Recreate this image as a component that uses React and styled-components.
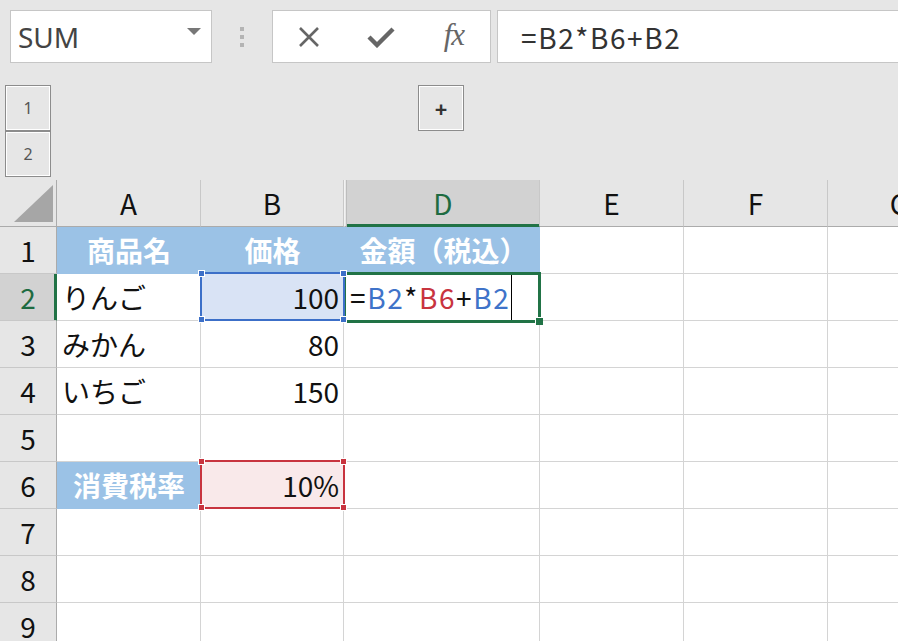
import React from "react";
import styled, { createGlobalStyle } from "styled-components";

const GlobalStyle = createGlobalStyle`
  html, body {
    margin: 0;
    padding: 0;
    background: #e6e6e6;
  }
  body {
    font-family: "Noto Sans CJK JP", "Noto Sans", sans-serif;
  }
`;

const COLS = ["A", "B", "C", "D", "E", "F", "G"];
const BLUE_FILL = "#9bc2e6";

const CELLS = {
  A1: { text: "商品名", fill: BLUE_FILL, head: true },
  B1: { text: "価格", fill: BLUE_FILL, head: true },
  C1: { fill: BLUE_FILL },
  D1: { text: "金額（税込）", fill: BLUE_FILL, head: true },
  A2: { text: "りんご" },
  B2: { text: "100", right: true, fill: "#d9e3f5", mark: "#3c6fc8" },
  D2: { formula: true },
  A3: { text: "みかん" },
  B3: { text: "80", right: true },
  A4: { text: "いちご" },
  B4: { text: "150", right: true },
  A6: { text: "消費税率", fill: BLUE_FILL, head: true },
  B6: { text: "10%", right: true, fill: "#f9e9ea", mark: "#c8343f" },
};

const App = () => {
  return (
    <>
      <GlobalStyle />
      <Page>
        <Toolbar>
          <NameBox>
            <span>SUM</span>
            <DropArrow />
          </NameBox>
          <Grip>
            <i />
            <i />
            <i />
          </Grip>
          <FuncBox>
            <FuncButton>
              <svg width="24" height="20" viewBox="0 0 24 20">
                <path d="M3 1 L21 19 M21 1 L3 19" stroke="#666" strokeWidth="2.6" fill="none" />
              </svg>
            </FuncButton>
            <FuncButton>
              <svg width="28" height="22" viewBox="0 0 28 22">
                <path d="M2 11 L10 19 L26 3" stroke="#666" strokeWidth="4.4" fill="none" />
              </svg>
            </FuncButton>
            <FuncButton>
              <Fx>fx</Fx>
            </FuncButton>
          </FuncBox>
          <FormulaBox>=B2*B6+B2</FormulaBox>
        </Toolbar>

        <OutlineBar>
          <LevelStack>
            <OutlineButton>1</OutlineButton>
            <OutlineButton>2</OutlineButton>
          </LevelStack>
          <OutlineButton $plus>+</OutlineButton>
        </OutlineBar>

        <Sheet>
          <Corner>
            <svg width="39" height="37" viewBox="0 0 39 37">
              <polygon points="39,0 39,37 0,37" fill="#a6a6a6" />
            </svg>
          </Corner>
          {COLS.map((c) => (
            <ColHead key={c} $active={c === "D"} $hidden={c === "C"}>
              {c === "C" ? "" : c}
            </ColHead>
          ))}

          {Array.from({ length: 9 }, (_, i) => i + 1).map((r) => (
            <React.Fragment key={r}>
              <RowHead $active={r === 2}>{r}</RowHead>
              {COLS.map((c) => {
                const cell = CELLS[c + r] || {};
                return (
                  <Cell
                    key={c}
                    $fill={cell.fill}
                    $head={cell.head}
                    $right={cell.right}
                    $rel={cell.mark || cell.formula}
                  >
                    {cell.text}
                    {cell.formula && (
                      <>
                        <Formula>
                          =<Ref $color="#3f73c9">B2</Ref>*<Ref $color="#c8343f">B6</Ref>+
                          <Ref $color="#3f73c9">B2</Ref>
                        </Formula>
                        <Caret />
                        <ActiveBorder />
                        <FillHandle />
                      </>
                    )}
                    {cell.mark && (
                      <RefBorder $color={cell.mark}>
                        <Handle $color={cell.mark} $top $left />
                        <Handle $color={cell.mark} $top />
                        <Handle $color={cell.mark} $left />
                        <Handle $color={cell.mark} />
                      </RefBorder>
                    )}
                  </Cell>
                );
              })}
            </React.Fragment>
          ))}
        </Sheet>
      </Page>
    </>
  );
};

export default App;

const Page = styled.div`
  width: 898px;
  height: 641px;
  overflow: hidden;
  background: #e6e6e6;
`;

const Toolbar = styled.div`
  display: flex;
  align-items: stretch;
  height: 53px;
  padding: 10px 0 0 10px;

  & > * {
    flex-shrink: 0;
  }
`;

const NameBox = styled.div`
  width: 202px;
  box-sizing: border-box;
  border: 1px solid #c6c6c6;
  background: #fff;
  display: flex;
  align-items: center;
  justify-content: space-between;
  padding: 0 10px 0 7px;
  font-family: "Noto Sans", sans-serif;
  font-size: 28px;
  color: #444;
`;

const DropArrow = styled.span`
  width: 0;
  height: 0;
  margin-top: -10px;
  border-left: 7px solid transparent;
  border-right: 7px solid transparent;
  border-top: 7px solid #777;
`;

const Grip = styled.div`
  display: flex;
  flex-direction: column;
  gap: 4px;
  align-self: center;
  margin: 0 28px;

  i {
    display: block;
    width: 4px;
    height: 4px;
    background: #b4b4b4;
  }
`;

const FuncBox = styled.div`
  width: 219px;
  box-sizing: border-box;
  border: 1px solid #c6c6c6;
  background: #fff;
  display: grid;
  grid-template-columns: repeat(3, 1fr);
  margin-right: 6px;
`;

const FuncButton = styled.div`
  display: flex;
  align-items: center;
  justify-content: center;
`;

const Fx = styled.span`
  font-family: "Liberation Serif", serif;
  font-style: italic;
  font-size: 31px;
  color: #666;
  letter-spacing: -1px;
  margin-top: -4px;
`;

const FormulaBox = styled.div`
  width: 420px;
  box-sizing: border-box;
  border: 1px solid #c6c6c6;
  background: #fff;
  display: flex;
  align-items: center;
  padding-left: 23px;
  font-size: 28px;
  letter-spacing: 1.6px;
  color: #333;
`;

const OutlineBar = styled.div`
  display: flex;
  align-items: flex-start;
  height: 117px;
  box-sizing: border-box;
  padding: 22px 0 0 5px;
`;

const LevelStack = styled.div`
  display: flex;
  flex-direction: column;
`;

const OutlineButton = styled.div`
  width: 46px;
  height: 46px;
  box-sizing: border-box;
  border: 1px solid #8c8c8c;
  box-shadow: inset 0 0 0 1px #fff;
  background: #e6e6e6;
  display: flex;
  align-items: center;
  justify-content: center;
  font-family: "Noto Sans", sans-serif;
  font-size: ${(p) => (p.$plus ? "22px" : "16px")};
  font-weight: ${(p) => (p.$plus ? 700 : 400)};
  color: ${(p) => (p.$plus ? "#333" : "#555")};
  margin-left: ${(p) => (p.$plus ? "367px" : "0")};
`;

const Sheet = styled.div`
  display: grid;
  grid-template-columns: 57px 144px 143px 3px 193px 144px 144px 144px;
  grid-auto-rows: 47px;
  background: #fff;
  font-size: 28px;
`;

const Corner = styled.div`
  box-sizing: border-box;
  background: #e6e6e6;
  border-right: 1px solid #ababab;
  border-bottom: 1px solid #ababab;
  display: flex;
  align-items: flex-end;
  justify-content: flex-end;
  padding: 0 3px 4px 0;
`;

const ColHead = styled.div`
  box-sizing: border-box;
  background: ${(p) => (p.$active ? "#d2d2d2" : "#e6e6e6")};
  border-right: 1px solid ${(p) => (p.$hidden ? "#bdbdbd" : "#c8c8c8")};
  border-left: ${(p) => (p.$hidden ? "1px solid #f2f2f2" : "none")};
  border-bottom: 1px solid ${(p) => (p.$active ? "#217346" : "#ababab")};
  box-shadow: ${(p) => (p.$active ? "inset 0 -2px 0 #217346" : "none")};
  display: flex;
  align-items: center;
  justify-content: center;
  color: ${(p) => (p.$active ? "#1e6b41" : "#111")};
  overflow: hidden;
`;

const RowHead = styled.div`
  box-sizing: border-box;
  background: ${(p) => (p.$active ? "#d2d2d2" : "#e6e6e6")};
  border-right: 1px solid ${(p) => (p.$active ? "#217346" : "#ababab")};
  box-shadow: ${(p) => (p.$active ? "inset -2px 0 0 #217346" : "none")};
  border-bottom: 1px solid #c8c8c8;
  display: flex;
  align-items: center;
  justify-content: center;
  color: ${(p) => (p.$active ? "#1e6b41" : "#111")};
`;

const Cell = styled.div`
  position: ${(p) => (p.$rel ? "relative" : "static")};
  box-sizing: border-box;
  background: ${(p) => p.$fill || "#fff"};
  border-right: 1px solid ${(p) => p.$fill || "#d4d4d4"};
  border-bottom: 1px solid ${(p) => p.$fill || "#d4d4d4"};
  display: flex;
  align-items: center;
  justify-content: ${(p) => (p.$head ? "center" : p.$right ? "flex-end" : "flex-start")};
  padding: 0 4px 0 5px;
  white-space: nowrap;
  color: ${(p) => (p.$head ? "#fff" : "#111")};
  font-weight: ${(p) => (p.$head ? 700 : 400)};
`;

const Formula = styled.span`
  letter-spacing: 1.6px;
  margin-left: -2px;
`;

const Ref = styled.span`
  color: ${(p) => p.$color};
`;

const Caret = styled.span`
  align-self: stretch;
  width: 1px;
  margin-left: 1px;
  background: #000;
`;

const ActiveBorder = styled.div`
  position: absolute;
  left: -4px;
  right: -2px;
  top: -2px;
  bottom: -3px;
  border: 3px solid #217346;
  z-index: 2;
  pointer-events: none;
`;

const FillHandle = styled.div`
  position: absolute;
  right: -4px;
  bottom: -5px;
  width: 7px;
  height: 7px;
  background: #217346;
  border-left: 1px solid #fff;
  border-top: 1px solid #fff;
  z-index: 3;
`;

const RefBorder = styled.div`
  position: absolute;
  left: -1px;
  right: -2px;
  top: -2px;
  bottom: -1px;
  border: 2px solid ${(p) => p.$color};
  z-index: 3;
  pointer-events: none;
`;

const Handle = styled.div`
  position: absolute;
  width: 5px;
  height: 5px;
  background: ${(p) => p.$color};
  border: 1px solid #fff;
  ${(p) => (p.$top ? "top: -4px;" : "bottom: -4px;")}
  ${(p) => (p.$left ? "left: -4px;" : "right: -4px;")}
`;
